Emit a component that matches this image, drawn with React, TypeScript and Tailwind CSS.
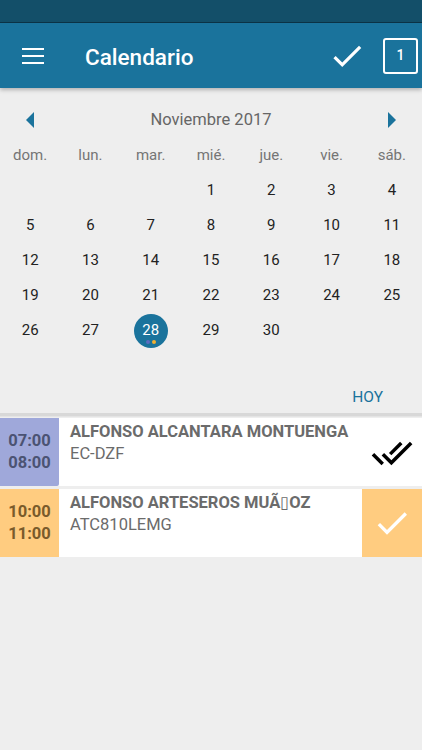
import React from "react"

const DAY_NAMES = ["dom.", "lun.", "mar.", "mié.", "jue.", "vie.", "sáb."]

// November 2017 starts on a Wednesday
const CELLS: (number | null)[] = [
  null, null, null,
  ...Array.from({ length: 30 }, (_, i) => i + 1),
]

const APPOINTMENTS = [
  {
    id: 1,
    start: "07:00",
    end: "08:00",
    name: "ALFONSO ALCANTARA MONTUENGA",
    code: "EC-DZF",
    tone: "purple",
  },
  {
    id: 2,
    start: "10:00",
    end: "11:00",
    name: "ALFONSO ARTESEROS MUÃ\u25AFOZ",
    code: "ATC810LEMG",
    tone: "orange",
  },
] as const

function CheckIcon({ size, className }: { size: number; className?: string }) {
  return (
    <svg width={size} height={size} viewBox="0 0 24 24" className={className}>
      <path fill="currentColor" d="M9 16.17L4.83 12l-1.42 1.41L9 19 21 7l-1.41-1.41z" />
    </svg>
  )
}

function DoneAllIcon({ size }: { size: number }) {
  return (
    <svg width={size} height={size} viewBox="0 0 24 24" className="text-black">
      <path
        fill="currentColor"
        d="M18 7l-1.41-1.41-6.34 6.34 1.41 1.41L18 7zm4.24-1.41L11.66 16.17 7.48 12l-1.41 1.41L11.66 19l12-12-1.42-1.41zM.41 13.41L6 19l1.41-1.41L1.83 12 .41 13.41z"
      />
    </svg>
  )
}

export default function App() {
  return (
    <div className="w-[422px] h-[750px] bg-[#eeeeee] font-['Roboto',sans-serif] overflow-hidden">
      {/* Status bar */}
      <div className="h-[23px] bg-[#134f69] border-b border-[#0c3447]" />

      {/* App bar */}
      <div className="relative z-10 h-[65px] bg-[#1a739c] flex items-center shadow-[0_2px_4px_rgba(0,0,0,0.25)]">
        <div className="w-[85px] pl-[22px] flex flex-col gap-[5px]">
          <span className="block w-[22px] h-[2px] bg-white" />
          <span className="block w-[22px] h-[2px] bg-white" />
          <span className="block w-[22px] h-[2px] bg-white" />
        </div>
        <h1 className="flex-1 pt-[3px] text-white text-[22.5px] font-medium leading-none">Calendario</h1>
        <CheckIcon size={38} className="text-white mr-[17px]" />
        <div className="mr-[4px] w-[35px] h-[36px] border-2 border-white rounded-[3px] flex items-center justify-center text-white text-[14px] font-medium">
          1
        </div>
      </div>

      {/* Calendar */}
      <div className="pt-[14px]">
        <div className="h-[36px] flex items-center justify-between px-[26px]">
          <span className="w-0 h-0 border-y-[8px] border-y-transparent border-r-[8px] border-r-[#1a739c]" />
          <span className="text-[16.5px] text-[#666666]">Noviembre 2017</span>
          <span className="w-0 h-0 border-y-[8px] border-y-transparent border-l-[8px] border-l-[#1a739c]" />
        </div>

        <div className="grid grid-cols-7 h-[35px] items-center">
          {DAY_NAMES.map((d) => (
            <span key={d} className="text-center text-[15px] text-[#757575]">
              {d}
            </span>
          ))}
        </div>

        <div className="grid grid-cols-7 auto-rows-[35px]">
          {CELLS.map((day, i) => (
            <div key={i} className="flex items-center justify-center">
              {day === 28 ? (
                <div className="relative w-[34px] h-[34px] rounded-full bg-[#1a739c] flex items-center justify-center text-white text-[15px]">
                  28
                  <div className="absolute bottom-[4px] left-1/2 -translate-x-1/2 flex gap-[2px]">
                    <span className="w-[4px] h-[4px] rounded-full bg-[#5c6bc0]" />
                    <span className="w-[4px] h-[4px] rounded-full bg-[#f0b030]" />
                  </div>
                </div>
              ) : (
                <span className="text-[15px] text-[#222222]">{day ?? ""}</span>
              )}
            </div>
          ))}
        </div>

        <div className="pt-[39px] pb-[6px] flex justify-end pr-[39px]">
          <span className="h-[20px] leading-[20px] text-[15.5px] text-[#1a739c]">HOY</span>
        </div>
      </div>

      {/* Divider */}
      <div className="h-[4px] bg-[#d8d8d8] border-b border-[#e4e4e4]" />

      {/* Appointments */}
      <div className="flex flex-col gap-[3px] pt-[1px]">
        {APPOINTMENTS.map((a) => (
          <div key={a.id} className="h-[68px] bg-white flex">
            <div
              className={
                a.tone === "purple"
                  ? "w-[59px] bg-[#9fa8da] rounded-br-[2px] flex flex-col items-center justify-center text-[16.5px] font-bold leading-[22px] text-[#4b5373]"
                  : "w-[59px] bg-[#ffcc80] flex flex-col items-center justify-center text-[16.5px] font-bold leading-[22px] text-[#7a5b2b]"
              }
            >
              <span>{a.start}</span>
              <span>{a.end}</span>
            </div>
            <div className="flex-1 pl-[11px] pt-[3px]">
              <div className="text-[16.5px] font-bold text-[#6b6b6b] leading-[22px] font-['Roboto','DejaVu_Sans',sans-serif]">
                {a.name}
              </div>
              <div className="text-[16.5px] text-[#6b6b6b] leading-[22px]">{a.code}</div>
            </div>
            {a.tone === "purple" ? (
              <div className="w-[60px] flex items-center justify-center pt-[1px]">
                <DoneAllIcon size={42} />
              </div>
            ) : (
              <div className="w-[60px] bg-[#ffcc80] flex items-center justify-center">
                <CheckIcon size={40} className="text-white" />
              </div>
            )}
          </div>
        ))}
      </div>
    </div>
  )
}
